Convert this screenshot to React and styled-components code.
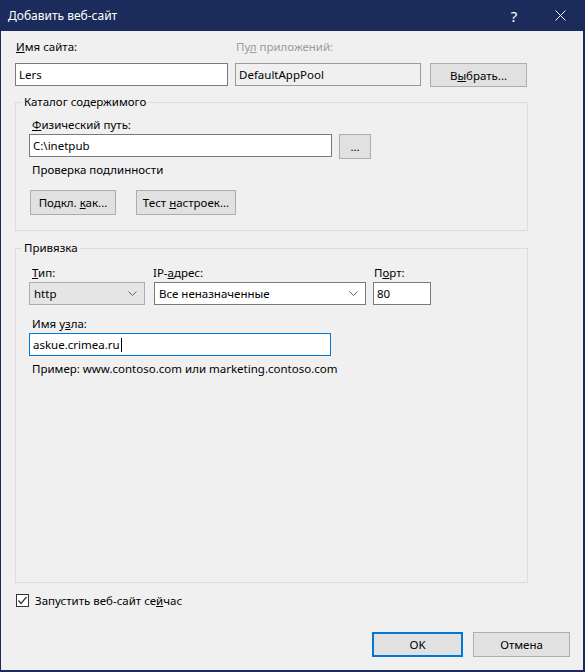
import React from 'react'
import styled, { createGlobalStyle } from 'styled-components'

const Global = createGlobalStyle`
  html, body { margin: 0; padding: 0; background: #f0f0f0; }
  body {
    font-family: "Noto Sans", "Liberation Sans", Arial, sans-serif;
    font-size: 11.5px;
    color: #000;
  }
  * { box-sizing: border-box; }
`

const Window = styled.div`
  width: 585px;
  height: 672px;
  display: flex;
  flex-direction: column;
  background: #f0f0f0;
  border-style: solid;
  border-color: #1b2c5c;
  border-width: 0 2px 2px 1px;
`

const TitleBar = styled.div`
  height: 31px;
  flex: none;
  display: flex;
  align-items: center;
  background: #1b2c5c;
  color: #fff;
  padding-left: 8px;
  margin: 0 -2px 0 -1px;
  padding-right: 2px;
`

const Title = styled.div`
  flex: 1;
  font-size: 12px;
`

const TitleButton = styled.div`
  width: 46px;
  height: 31px;
  display: flex;
  align-items: center;
  justify-content: center;
  font-size: 15px;
  color: #fff;
`

const Body = styled.div`
  flex: 1;
  display: flex;
  flex-direction: column;
  padding: 8px 13px 13px 14px;
  min-height: 0;
`

const TopGrid = styled.div`
  display: grid;
  grid-template-columns: 213px 186px 97px;
  column-gap: 7px;
  row-gap: 8px;
`

const Label = styled.div`
  line-height: 16px;
  height: 16px;
  white-space: nowrap;
  color: ${p => (p.$disabled ? '#9c9c9c' : '#000')};
  margin-left: ${p => p.$indent ?? 1}px;
  margin-top: ${p => p.$mt ?? 0}px;
`

const TextBox = styled.div`
  height: 23px;
  width: ${p => p.$w}px;
  display: flex;
  align-items: center;
  padding-left: 3px;
  white-space: nowrap;
  background: ${p => (p.$readonly ? '#f0f0f0' : '#fff')};
  border: 1px solid ${p => (p.$focused ? '#0078d7' : p.$readonly ? '#9a9a9a' : '#7a7a7a')};
`

const Caret = styled.span`
  display: inline-block;
  width: 1px;
  height: 14px;
  background: #000;
  margin-left: 1px;
`

const Button = styled.button`
  height: ${p => p.$h ?? 25}px;
  width: ${p => p.$w}px;
  margin: 0;
  margin-left: ${p => p.$ml ?? 0}px;
  padding: 0;
  font: inherit;
  color: #000;
  background: #e1e1e1;
  border: ${p => (p.$default ? '2px solid #0078d7' : '1px solid #adadad')};
  white-space: nowrap;
`

const Group = styled.fieldset`
  margin: ${p => p.$mt}px 0 0 0;
  padding: 0;
  width: 513px;
  min-width: 0;
  border: 1px solid #dcdcdc;
  ${p => p.$grow && 'flex: 1;'}
`

const Legend = styled.legend`
  margin-left: 6px;
  padding: 0 2px;
  line-height: 16px;
`

const GroupBody = styled.div`
  padding: ${p => p.$pt}px 0 ${p => p.$pb}px 13px;
  display: flex;
  flex-direction: column;
`

const Row = styled.div`
  display: flex;
  align-items: flex-start;
  gap: ${p => p.$gap}px;
  margin-top: ${p => p.$mt ?? 0}px;
`

const Column = styled.div`
  display: flex;
  flex-direction: column;
  gap: 1px;
`

const Combo = styled.div`
  height: 23px;
  width: ${p => p.$w}px;
  display: flex;
  align-items: center;
  justify-content: space-between;
  padding: 0 7px 0 4px;
  background: ${p => (p.$flat ? '#e5e5e5' : '#fff')};
  border: 1px solid ${p => (p.$flat ? '#acacac' : '#7a7a7a')};
  white-space: nowrap;
`

const CheckRow = styled.div`
  display: flex;
  align-items: center;
  gap: 6px;
  height: 16px;
  margin-top: 9px;
  padding-left: 1px;
`

const CheckBox = styled.span`
  width: 13px;
  height: 13px;
  border: 1px solid #333;
  background: #fff;
  display: flex;
  align-items: center;
  justify-content: center;
`

const Footer = styled.div`
  display: flex;
  justify-content: flex-end;
  gap: 10px;
  margin-top: 24px;
`

const Chevron = () => (
  <svg width="9" height="5" viewBox="0 0 9 5">
    <path d="M0.5 0.5 L4.5 4.5 L8.5 0.5" fill="none" stroke="#606060" strokeWidth="1" />
  </svg>
)

export default function App() {
  return (
    <>
      <Global />
      <Window>
        <TitleBar>
          <Title>Добавить веб-сайт</Title>
          <TitleButton>?</TitleButton>
          <TitleButton>
            <svg width="11" height="11" viewBox="0 0 11 11">
              <path d="M0.5 0.5 L10.5 10.5 M10.5 0.5 L0.5 10.5" stroke="#fff" strokeWidth="1" />
            </svg>
          </TitleButton>
        </TitleBar>

        <Body>
          <TopGrid>
            <Label><u>И</u>мя сайта:</Label>
            <Label $disabled>Пу<u>л</u> приложений:</Label>
            <span />
            <TextBox $w={213}>Lers</TextBox>
            <TextBox $w={186} $readonly>DefaultAppPool</TextBox>
            <Button $w={97} $h={24} $ml={2}>В<u>ы</u>брать...</Button>
          </TopGrid>

          <Group $mt={7}>
            <Legend>Каталог содержимого</Legend>
            <GroupBody $pt={7} $pb={15}>
              <Label $indent={3}><u>Ф</u>изический путь:</Label>
              <Row $gap={7} $mt={1}>
                <TextBox $w={303}>C:\inetpub</TextBox>
                <Button $w={32}>...</Button>
              </Row>
              <Label $indent={3} $mt={3}>Проверка подлинности</Label>
              <Row $gap={20} $mt={12}>
                <Button $w={86} $ml={1}>Подкл. <u>к</u>ак...</Button>
                <Button $w={100}>Тест <u>н</u>астроек...</Button>
              </Row>
            </GroupBody>
          </Group>

          <Group $mt={9} $grow>
            <Legend>Привязка</Legend>
            <GroupBody $pt={9} $pb={0}>
              <Row $gap={9}>
                <Column>
                  <Label $indent={3}><u>Т</u>ип:</Label>
                  <Combo $w={116} $flat>http<Chevron /></Combo>
                </Column>
                <Column>
                  <Label $indent={-1}>IP-<u>а</u>дрес:</Label>
                  <Combo $w={212}>Все неназначенные<Chevron /></Combo>
                </Column>
                <Column style={{ marginLeft: -2 }}>
                  <Label>П<u>о</u>рт:</Label>
                  <TextBox $w={58}>80</TextBox>
                </Column>
              </Row>
              <Label $indent={3} $mt={11}>Имя у<u>з</u>ла:</Label>
              <Row $gap={0} $mt={1}>
                <TextBox $w={302} $focused>askue.crimea.ru<Caret /></TextBox>
              </Row>
              <Label $indent={3} $mt={5}>Пример: www.contoso.com или marketing.contoso.com</Label>
            </GroupBody>
          </Group>

          <CheckRow>
            <CheckBox>
              <svg width="11" height="11" viewBox="0 0 11 11">
                <path d="M1.5 5.5 L4 8.5 L9.5 2" fill="none" stroke="#333" strokeWidth="1.2" />
              </svg>
            </CheckBox>
            <span>Запустить веб-сайт се<u>й</u>час</span>
          </CheckRow>

          <Footer>
            <Button $w={91} $default>OK</Button>
            <Button $w={97}>Отмена</Button>
          </Footer>
        </Body>
      </Window>
    </>
  )
}
